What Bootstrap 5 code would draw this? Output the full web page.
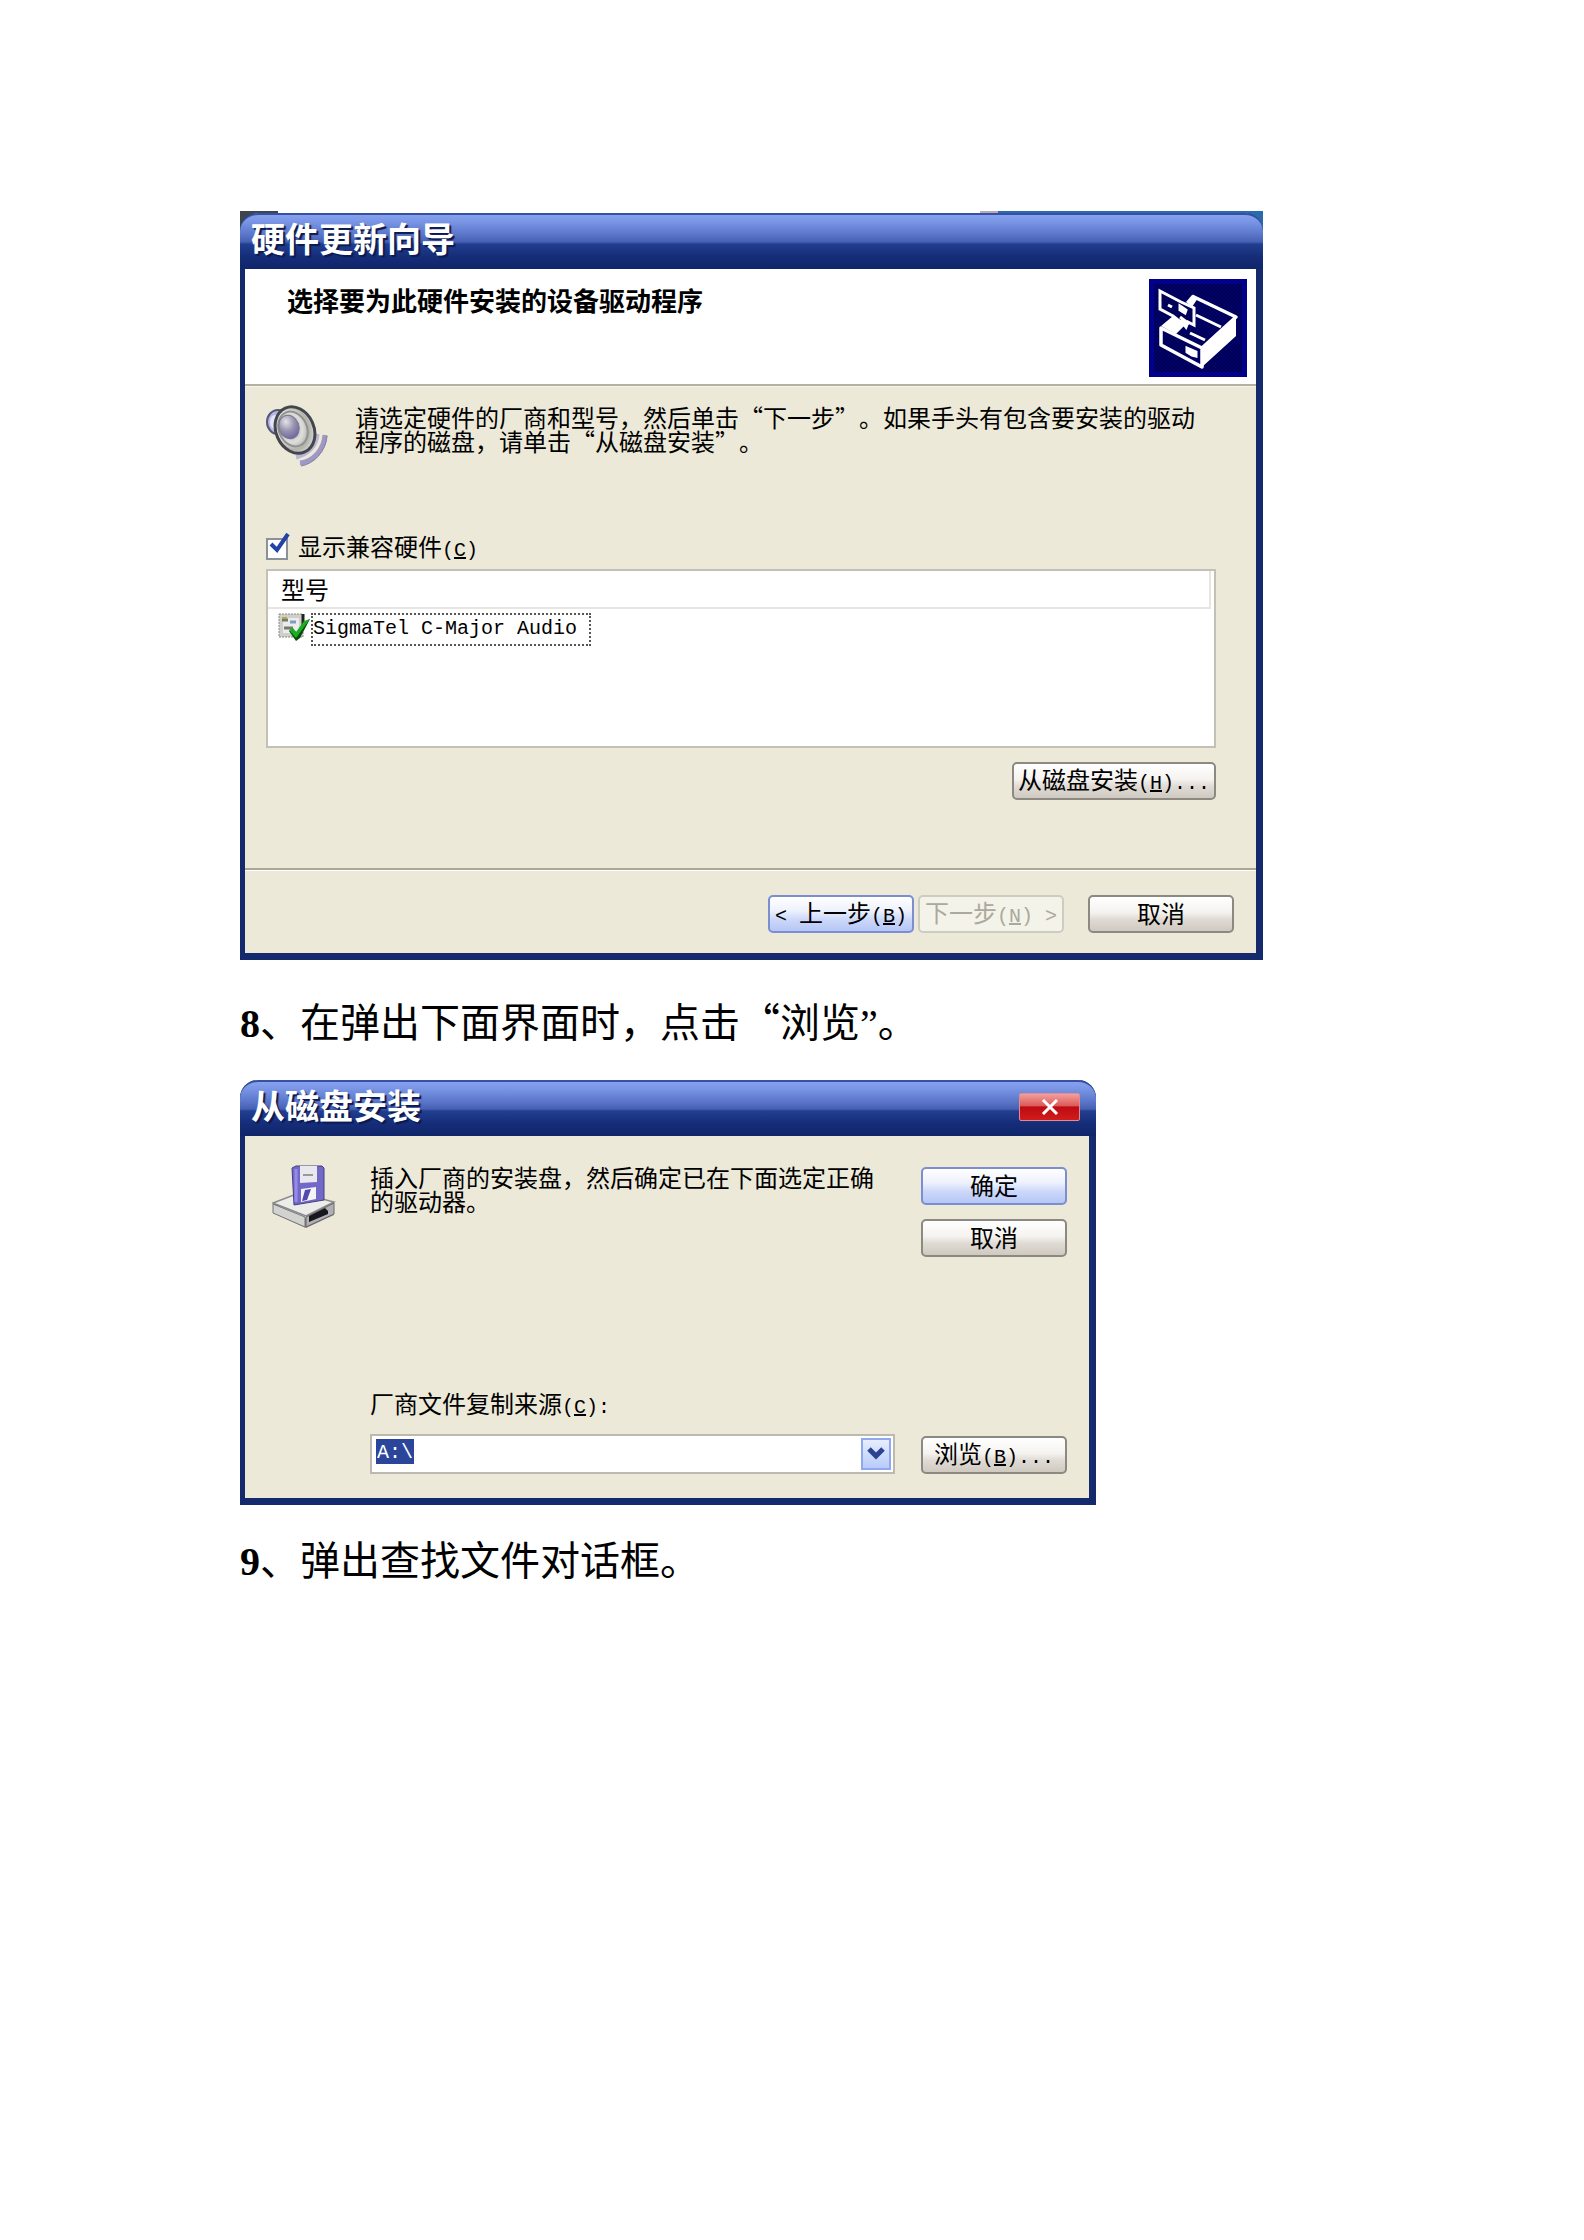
<!DOCTYPE html>
<html lang="zh-CN">
<head>
<meta charset="utf-8">
<meta name="viewport" content="width=device-width, initial-scale=1">
<title>驱动安装说明</title>
<link rel="stylesheet" href="https://cdn.jsdelivr.net/npm/bootstrap@5.3.0/dist/css/bootstrap.min.css">
<style>
body{background:#fff;color:#000;font-family:"Noto Sans CJK SC",sans-serif;font-size:24px;line-height:24px}
.sheet{padding:211px 240px 120px}
.lat{font-family:"Liberation Mono",monospace;font-size:20px}
.step{font-size:40px;line-height:60px;margin:30px 0 26px}
.step:last-child{margin-top:23px}
.step strong,.step .rq{font-family:"Liberation Serif",serif}
/* strip of desktop visible behind the wizard */
.desk{max-width:1023px;padding-top:2px;background:linear-gradient(90deg,#3c464c 38px,#fff 38px 740px,#b9a9b4 740px 758px,#2a6cab 758px) 0 0/100% 20px no-repeat}
.xpwin{width:100%;background:#ece9d8;border:solid #142a6c;border-width:0 7px 7px 5px;border-radius:18px 18px 0 0}
.disk{max-width:856px}
.xpbar{height:56px;margin:0 -7px 0 -5px;padding:0 16px 0 11px;border-radius:18px 18px 0 0;border-top:2px solid #3650a4;
 background:linear-gradient(#86a2ee 0,#7692e2 8px,#5a75c8 20px,#4660b2 27px,#223e90 29px,#152d78 42px,#102569 100%)}
.xpbar h2{font-size:34px;line-height:40px;padding-bottom:8px;font-weight:700;color:#fff;text-shadow:2px 2px 1px #0b1a50}
.xbtn{width:61px;height:28px;border:1px solid #e08a96;border-radius:2px;margin-bottom:4px;background:linear-gradient(#f2a09c 0,#dc5a5a 45%,#bd0c12 50%,#d01c1c 100%)}
.wizhead{background:#fff;height:117px;padding:10px 9px 0 42px;border-bottom:2px solid #b5b0a2}
.wizhead h3{font-size:26px;line-height:26px;font-weight:700;margin-top:8px}
.wizbody{padding:18px 40px 0 21px;border-top:1px solid #f6f4ea;height:482px}
.intro{gap:27px;margin-bottom:67px}
.intro p{text-spacing-trim:space-all}
.xpcheck{width:22px;height:22px;margin:0;border:2px solid #8c9098;background:#fff}
.xpcheck[type=checkbox]{border-radius:0}
.xpcheck:checked{background-color:#fff;border-color:#8c9098;background-image:none}
.tick{left:2px;top:-5px;pointer-events:none}
.checkline{gap:10px}
.listbox{height:179px;border:2px solid #c3c1b6;background:#fff;margin:6px 0 14px}
.listbox th{height:38px;padding:0 10px 0 13px;font-weight:400;border-bottom:2px solid #e6e5e0;border-right:2px solid #e6e5e0}
.listbox td{padding:4px 0 0 10px}
.listbox table{width:calc(100% - 3px);border-collapse:separate;border-spacing:0}
.focusrow{width:280px;height:33px;border:2px dotted #555;line-height:28px}
.xp{width:146px;height:38px;padding:0 0 2px;border:2px solid #8b8981;border-radius:5px;font-size:24px;line-height:30px;color:#000;white-space:nowrap;
 background:linear-gradient(#fff 0,#f5f3f0 45%,#e0dbd5 65%,#cfc9c0 100%)}
.xp:hover{color:#000}
.xp.go{border-color:#7b8fd0;background:linear-gradient(#fff 0,#eef2fe 40%,#cdd9fa 65%,#b6c6f6 100%)}
.xp:disabled{opacity:1;color:#aaa99c;border-color:#cccdc0;background:#f4f3ea}
.xp.wide{width:204px}
.wizfoot{height:85px;border-top:2px solid #aba796;box-shadow:inset 0 1px #fff;padding:25px 22px 0}
.diskbody{padding:29px 22px 24px 27px;gap:26px}
.actions{gap:14px;padding-top:2px}
.combo{border:2px solid #bcbab0;background:#fff;height:40px;padding:2px}
.combo input{border:0;padding:0 0 4px 3px;color:#fff;outline:0;height:32px;background:linear-gradient(#2b459b,#2b459b) 2px 1px/38px 25px no-repeat;line-height:24px}
.drop{width:30px;height:32px;padding:0;border:2px solid #8fa8ee;background:linear-gradient(#e6eefe,#b9cbfa);flex:none}
.fields{margin-left:34px}
.source{margin-top:178px}
.source label{margin-bottom:14px}
svg{display:block;flex:none}
</style>
<script src="https://cdn.jsdelivr.net/npm/bootstrap@5.3.0/dist/js/bootstrap.bundle.min.js"></script>
</head>
<body>
<main class="sheet">
 <div class="desk">
 <section class="xpwin" aria-label="硬件更新向导">
  <header class="xpbar d-flex align-items-center"><h2 class="m-0">硬件更新向导</h2></header>
  <div class="wizhead d-flex justify-content-between">
   <h3 class="mb-0">选择要为此硬件安装的设备驱动程序</h3>
   <svg width="98" height="98" viewBox="0 0 98 98">
    <defs><pattern id="dots" width="4" height="4" patternUnits="userSpaceOnUse"><rect width="4" height="4" fill="#00007c"/><rect width="2" height="2" fill="#00003c"/><rect x="2" y="2" width="2" height="2" fill="#000048"/></pattern></defs>
    <rect width="98" height="98" fill="#00008a"/><rect x="5" y="5" width="88" height="88" fill="url(#dots)"/>
    <path d="M37 23L43 16L49 19L43 28ZM12 47L24 37L37 45L27 55ZM53 69L87 38V57L53 88Z" fill="#fff"/>
    <path d="M43 17L87 38L53 69L12 49V66L53 88V70" fill="none" stroke="#fff" stroke-width="3.5" stroke-linejoin="round"/>
    <path d="M47 36L72 48M41 54L56 61" fill="none" stroke="#fff" stroke-width="3"/>
    <path d="M11 12L32 23L45 29V46L39 43L37 48L33 43L29 41L24 37L11 30Z" fill="#000058" stroke="#fff" stroke-width="3"/>
    <path d="M19 26L23 28M31 27L37 31L36 34L31 31ZM31 38L39 44L34 46M38 69L47 73V77L43 76L38 73Z" fill="#fff" stroke="#fff" stroke-width="3"/>
   </svg>
  </div>
  <div class="wizbody">
   <div class="intro d-flex">
    <svg width="62" height="62" viewBox="0 0 62 62">
     <defs><radialGradient id="cone" cx=".4" cy=".4" r=".65"><stop offset="0" stop-color="#9c9ca8"/><stop offset=".5" stop-color="#dededb"/><stop offset=".75" stop-color="#b3b3ae"/><stop offset="1" stop-color="#dcdcd8"/></radialGradient>
     <radialGradient id="cup" cx=".45" cy=".25" r=".8"><stop offset="0" stop-color="#e4e4e8"/><stop offset=".5" stop-color="#9894ae"/><stop offset="1" stop-color="#6660a0"/></radialGradient></defs>
     <path d="M59 30C58 45 47 57 34 58" fill="none" stroke="#9d98c4" stroke-width="5"/><path d="M51 29C50 41 42 49 30 52" fill="none" stroke="#bbb6d8" stroke-width="5"/>
     <path d="M61 31C60 46 48 59 35 61" fill="none" stroke="#85819f" stroke-width="1"/>
     <ellipse cx="12" cy="17" rx="11" ry="12" fill="#b8b8e4" stroke="#555775" stroke-width="2"/><ellipse cx="9" cy="17" rx="5" ry="7" fill="#e5e5fa"/>
     <ellipse cx="29" cy="25" rx="19" ry="24" transform="rotate(-24 29 25)" fill="url(#cone)" stroke="#45464b" stroke-width="3"/>
     <ellipse cx="27" cy="24" rx="14" ry="18" transform="rotate(-24 27 24)" fill="none" stroke="#92928f" stroke-width="2"/>
     <ellipse cx="23" cy="22" rx="10" ry="12" transform="rotate(-20 23 22)" fill="url(#cup)" stroke="#777590"/>
    </svg>
    <p class="m-0">请选定硬件的厂商和型号，然后单击“下一步”。如果手头有包含要安装的驱动程序的磁盘，请单击“从磁盘安装”。</p>
   </div>
   <div class="checkline d-flex align-items-center position-relative">
    <input class="form-check-input xpcheck" type="checkbox" id="compat" checked>
    <svg class="tick position-absolute" width="24" height="26" viewBox="0 0 24 26"><path d="M3 15L9 21L20 5" fill="none" stroke="#2342a8" stroke-width="4"/></svg>
    <label for="compat">显示兼容硬件<span class="lat">(<u>C</u>)</span></label>
   </div>
   <div class="listbox">
    <table>
     <thead><tr><th scope="col">型号</th></tr></thead>
     <tbody><tr><td><div class="d-flex">
      <svg width="33" height="30" viewBox="0 0 33 30"><path d="M1 1H25V24H1Z" fill="#cfcfcc" stroke="#888" stroke-dasharray="2 1"/><path d="M5 5H21V20H5Z" fill="#ecece8"/><path d="M4 7H10M6 15H15" stroke="#777" stroke-width="3"/><path d="M4 5H9" stroke="#b5a936" stroke-width="2"/><path d="M12 9H18" stroke="#7e9cc4" stroke-width="3"/><path d="M25 1V12" stroke="#222" stroke-width="3"/><path d="M11 18L18 28L22 25L32 6L26 9L19 20L15 16Z" fill="#0a4a0a"/><path d="M11 17L18 25L32 6L26 8L18 19L15 15Z" fill="#18ad22"/></svg>
      <div class="focusrow lat">SigmaTel C-Major Audio</div>
     </div></td></tr></tbody>
    </table>
   </div>
   <div class="d-flex justify-content-end"><button class="btn xp wide" type="button">从磁盘安装<span class="lat">(<u>H</u>)...</span></button></div>
  </div>
  <footer class="wizfoot d-flex justify-content-end">
   <button class="btn xp go me-1" type="button"><span class="lat">&lt; </span>上一步<span class="lat">(<u>B</u>)</span></button>
   <button class="btn xp me-4" type="button" disabled>下一步<span class="lat">(<u>N</u>) &gt;</span></button>
   <button class="btn xp" type="button">取消</button>
  </footer>
 </section>
 </div>

 <p class="step"><strong>8</strong>、在弹出下面界面时，点击“浏览<span class="rq">”</span>。</p>

 <section class="xpwin disk" aria-label="从磁盘安装">
  <header class="xpbar d-flex align-items-center justify-content-between">
   <h2 class="m-0">从磁盘安装</h2>
   <button class="xbtn d-flex align-items-center justify-content-center p-0" type="button" aria-label="关闭"><svg width="18" height="16" viewBox="0 0 18 16"><path d="M2 1L16 15M16 1L2 15" stroke="#fff" stroke-width="3"/></svg></button>
  </header>
  <div class="diskbody d-flex">
   <div class="d-flex flex-grow-1">
    <svg width="64" height="64" viewBox="0 0 64 64">
     <path d="M1 38V48L34 63L62 50V38L32 54Z" fill="#85858a"/><path d="M1 38L27 28L62 37L34 51Z" fill="#ececea" stroke="#8b8b8b" stroke-width="1.5"/>
     <path d="M1 39L33 52V62L1 48Z" fill="#d2d2d0" stroke="#777"/><path d="M34 52L62 38V49L34 62Z" fill="#b0b0b4" stroke="#66666a"/><path d="M37 51L53 43L56 46V49L37 57Z" fill="#17171c"/>
     <path d="M20 3L24 1L50 1L52 3V35L22 40Z" fill="#7268c8" stroke="#47417a"/>
     <path d="M28 1H45V17L28 18Z" fill="#e8e8ee"/><path d="M31 10H41" stroke="#999" stroke-width="2"/><path d="M29 24L44 22V34L29 37Z" fill="#f4f4f8"/><path d="M33 25L39 24L35 35L30 36Z" fill="#5449ad"/><path d="M24 4V37" stroke="#948bed" stroke-width="3"/>
    </svg>
    <div class="fields flex-grow-1">
     <p class="m-0">插入厂商的安装盘，然后确定已在下面选定正确的驱动器。</p>
     <div class="source">
      <label for="src" class="d-block">厂商文件复制来源<span class="lat">(<u>C</u>):</span></label>
      <div class="combo d-flex">
       <input class="lat flex-grow-1" id="src" type="text" value="A:\">
       <button class="drop d-flex align-items-center justify-content-center" type="button" aria-label="展开列表"><svg width="18" height="14" viewBox="0 0 18 14"><path d="M2 2L9 9L16 2" fill="none" stroke="#2c4490" stroke-width="5"/></svg></button>
      </div>
     </div>
    </div>
   </div>
   <div class="actions d-flex flex-column">
    <button class="btn xp go" type="button">确定</button>
    <button class="btn xp mb-auto" type="button">取消</button>
    <button class="btn xp" type="button">浏览<span class="lat">(<u>B</u>)...</span></button>
   </div>
  </div>
 </section>

 <p class="step"><strong>9</strong>、弹出查找文件对话框。</p>
</main>
</body>
</html>
